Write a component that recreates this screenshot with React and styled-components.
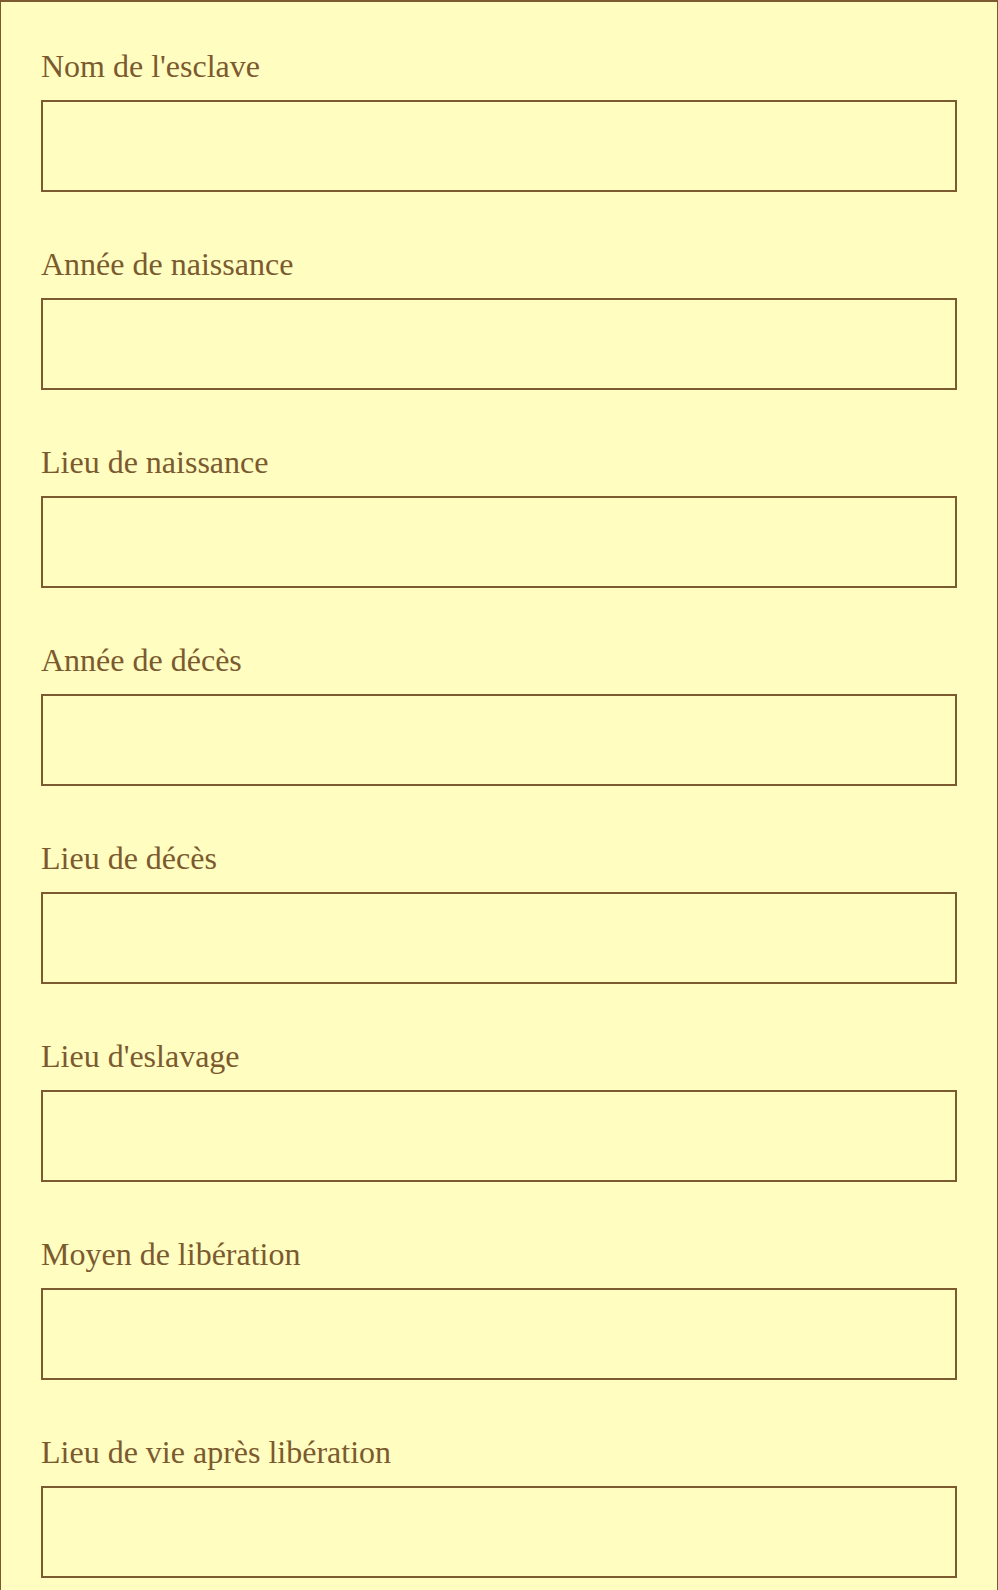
import React from "react";
import styled, { createGlobalStyle } from "styled-components";

const fields = [
    "Nom de l'esclave",
    "Année de naissance",
    "Lieu de naissance",
    "Année de décès",
    "Lieu de décès",
    "Lieu d'eslavage",
    "Moyen de libération",
    "Lieu de vie après libération",
];

const GlobalStyle = createGlobalStyle`
    html, body {
        margin: 0;
        padding: 0;
        background: #fffdc0;
    }
    * {
        box-sizing: border-box;
    }
`;

const Form = styled.form`
    width: 998px;
    min-height: 1590px;
    background: #fffdc0;
    border: 1px solid #7b5a2f;
    border-top-width: 2px;
    padding: 46px 40px 0 40px;
    font-family: "Liberation Serif", "Times New Roman", serif;
    color: #7b5a2f;
`;

const Field = styled.div`
    display: flex;
    flex-direction: column;
    margin-bottom: 54px;
`;

const Label = styled.label`
    display: block;
    font-size: 32px;
    line-height: 37px;
    margin-bottom: 15px;
`;

const Input = styled.input`
    display: block;
    width: 100%;
    height: 92px;
    margin: 0;
    padding: 0 12px;
    background: transparent;
    border: 2px solid #7b5a2f;
    border-radius: 0;
    font-family: inherit;
    font-size: 28px;
    color: inherit;
    outline: none;
`;

export default function App() {
    return (
        <>
            <GlobalStyle />
            <Form onSubmit={(e) => e.preventDefault()}>
                {fields.map((label, index) => (
                    <Field key={index}>
                        <Label htmlFor={`field-${index}`}>{label}</Label>
                        <Input id={`field-${index}`} type="text" />
                    </Field>
                ))}
            </Form>
        </>
    );
}
